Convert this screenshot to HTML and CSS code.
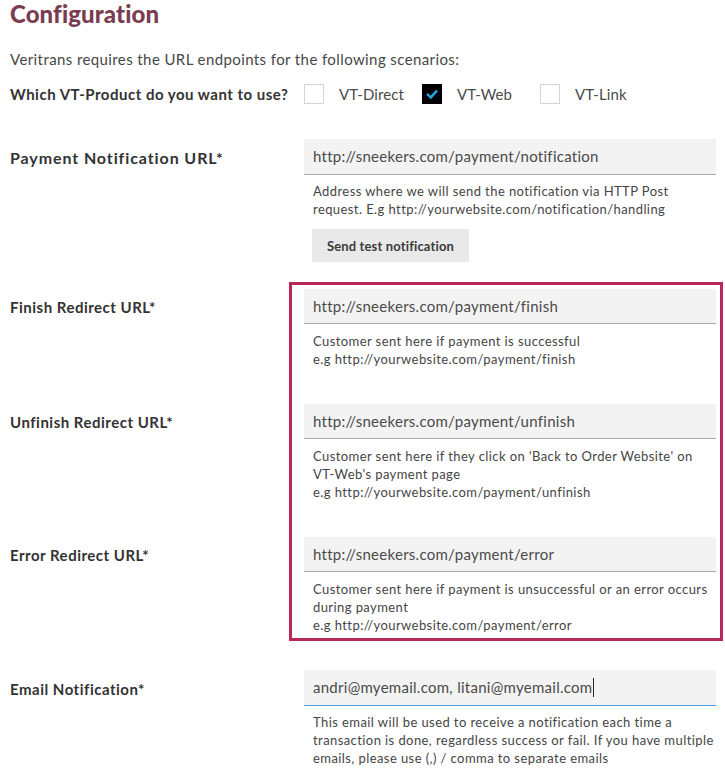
FILE: index.html
```html
<!DOCTYPE html>
<html lang="en">
<head>
<meta charset="utf-8">
<title>Configuration</title>
<link rel="stylesheet" href="styles.css">
</head>
<body>
<main class="page">
  <h1 class="title">Configuration</h1>
  <p class="intro">Veritrans requires the URL endpoints for the following scenarios:</p>
  <div class="product">
    <span class="product-q">Which VT-Product do you want to use?</span>
    <span class="opt"><span class="box"></span>VT-Direct</span>
    <span class="opt"><span class="box checked"><svg viewBox="0 0 20 20" width="20" height="20"><path d="M6 10.8 L8.8 13.4 L14.2 7.6" fill="none" stroke="#2aa4de" stroke-width="2.5" stroke-linecap="square"/></svg></span>VT-Web</span>
    <span class="opt"><span class="box"></span>VT-Link</span>
  </div>

  <section class="form">
    <div class="label label-wide">Payment Notification URL*</div>
    <div class="field">
      <div class="input">http://sneekers.com/payment/notification</div>
      <p class="help">Address where we will send the notification via HTTP Post<br>request. E.g http://yourwebsite.com/notification/handling</p>
      <button class="btn" type="button">Send test notification</button>
    </div>
  </section>

  <section class="form group">
    <div class="label l1">Finish Redirect URL*</div>
    <div class="label l2">Unfinish Redirect URL*</div>
    <div class="label l3">Error Redirect URL*</div>
    <div class="highlight">
      <div class="field">
        <div class="input">http://sneekers.com/payment/finish</div>
        <p class="help">Customer sent here if payment is successful<br>e.g http://yourwebsite.com/payment/finish</p>
      </div>
      <div class="field">
        <div class="input">http://sneekers.com/payment/unfinish</div>
        <p class="help">Customer sent here if they click on 'Back to Order Website' on<br>VT-Web's payment page<br>e.g http://yourwebsite.com/payment/unfinish</p>
      </div>
      <div class="field">
        <div class="input">http://sneekers.com/payment/error</div>
        <p class="help">Customer sent here if payment is unsuccessful or an error occurs<br>during payment<br>e.g http://yourwebsite.com/payment/error</p>
      </div>
    </div>
  </section>

  <section class="form email">
    <div class="label">Email Notification*</div>
    <div class="field">
      <div class="input focus">andri@myemail.com, litani@myemail.com<span class="caret"></span></div>
      <p class="help">This email will be used to receive a notification each time a<br>transaction is done, regardless success or fail. If you have multiple<br>emails, please use (,) / comma to separate emails</p>
    </div>
  </section>
</main>
</body>
</html>
```

FILE: styles.css
```css
* { box-sizing: border-box; }
html, body { margin: 0; background: #fff; }
body {
  font-family: Lato, "Open Sans", "Liberation Sans", sans-serif;
  color: #454545;
  overflow: hidden;
}
.page { padding: 0 0 0 10px; width: 725px; }

.title {
  margin: 0;
  font-size: 24px;
  line-height: 28px;
  font-weight: 900;
  color: #7a3c50;
  letter-spacing: 0.1px;
}
.intro {
  margin: 21px 0 0;
  font-size: 15px;
  line-height: 20px;
  color: #474747;
  letter-spacing: 0.4px;
}
.product {
  margin-top: 15px;
  display: flex;
  align-items: center;
  height: 20px;
  font-size: 15px;
}
.product-q {
  font-weight: 700;
  color: #333;
  width: 294px;
  letter-spacing: 0.5px;
}
.opt {
  display: flex;
  align-items: center;
  color: #4a4a4a;
  width: 118px;
  letter-spacing: 0.1px;
}
.box {
  width: 20px;
  height: 20px;
  border: 1px solid #d4d4d4;
  background: #fff;
  margin-right: 15px;
  display: inline-flex;
  flex: none;
}
.box.checked { background: #000; border-color: #000; }
.box svg { display: block; margin: -1px; }

.form {
  display: grid;
  grid-template-columns: 279px 434px;
  margin-top: 35px;
}
.label {
  font-size: 15px;
  line-height: 20px;
  font-weight: 700;
  color: #333;
  padding-top: 9px;
  letter-spacing: 0.5px;
  white-space: nowrap;
}
.label-wide {
  font-size: 16px;
  letter-spacing: 0.9px;
}
.field { padding: 0 7px 0 15px; }
.input {
  height: 36px;
  background: #f3f3f3;
  border-bottom: 1px solid #a9a9a9;
  font-size: 15px;
  line-height: 35px;
  padding-left: 9px;
  color: #4a4a4a;
  letter-spacing: 0.27px;
  white-space: nowrap;
}
.input.focus { border-bottom-color: #4aa3df; }
.caret {
  display: inline-block;
  width: 1px;
  height: 19px;
  background: #222;
  vertical-align: -4px;
  margin-left: 1px;
}
.help {
  margin: 7px 0 0;
  padding-left: 9px;
  font-size: 13px;
  line-height: 18px;
  color: #454545;
  letter-spacing: 0.42px;
  white-space: nowrap;
}
.btn {
  margin: 11px 0 0 8px;
  display: block;
  height: 33px;
  width: 157px;
  border: 0;
  background: #e9e9e9;
  font-family: inherit;
  font-size: 13px;
  font-weight: 700;
  color: #3a3a3a;
  letter-spacing: 0.15px;
  padding: 0;
}

.group {
  margin-top: 20px;
  grid-template-rows: auto auto auto;
  row-gap: 36px;
}
.group .label { grid-column: 1; }
.l1 { grid-row: 1; padding-top: 15px; }
.l2 { grid-row: 2; padding-top: 8px; }
.l3 { grid-row: 3; padding-top: 8px; }
.highlight {
  grid-column: 2;
  grid-row: 1 / span 3;
  display: grid;
  grid-template-rows: subgrid;
  border: 3px solid #b8285d;
  padding: 4px 4px 4px 12px;
}
.highlight .field { padding: 0; }
.highlight .input { height: 35px; line-height: 34px; }
.highlight .help { margin-top: 8px; }

.email { margin-top: 29px; }
.email .help { margin-top: 7px; }
```
